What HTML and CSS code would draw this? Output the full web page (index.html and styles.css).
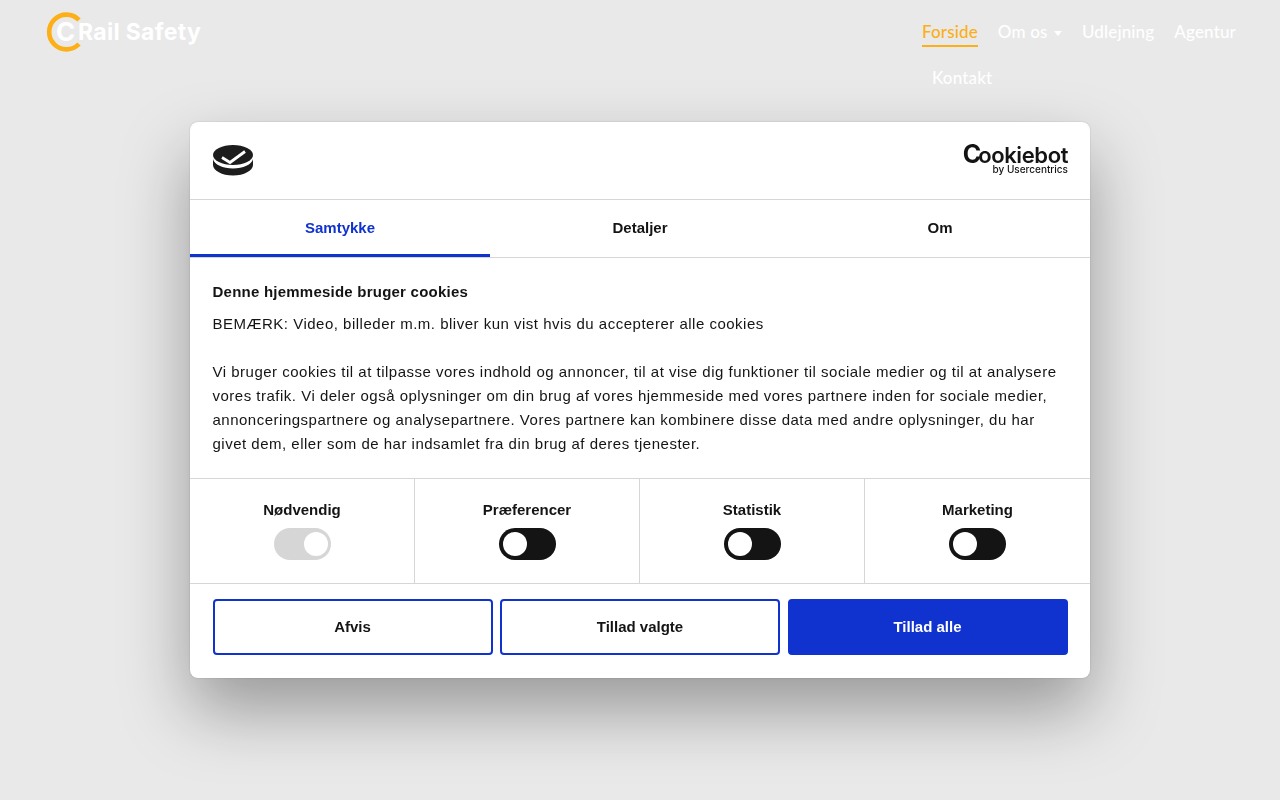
FILE: index.html
```html
<!DOCTYPE html>
<html lang="da">
<head>
<meta charset="utf-8">
<title>Rail Safety</title>
<link rel="stylesheet" href="styles.css">
</head>
<body>
<header class="site-header">
  <a class="logo">
    <svg class="logo-ring" width="40" height="42" viewBox="0 0 40 42"><path d="M33 9A17.330 17.330 0 1 0 33 33" fill="none" stroke="#fcaf17" stroke-width="4.600"/></svg>
    <span class="logo-c">C</span>
    <span class="logo-text">Rail Safety</span>
  </a>
  <nav class="nav">
    <a class="nav-item active">Forside</a>
    <a class="nav-item">Om os <span class="caret"></span></a>
    <a class="nav-item">Udlejning</a>
    <a class="nav-item">Agentur</a>
    <a class="nav-item wrapped">Kontakt</a>
  </nav>
</header>
<div class="overlay">
  <div class="dialog">
    <div class="dialog-head">
      <svg class="cookie" width="42" height="32" viewBox="0 0 42 32">
        <path d="M1 14v6c0 5.500 9 10.500 20 10.500s20-5 20-10.500v-6c-1 5.500-10 9.500-20 9.500s-19-4-20-9.500z" fill="#1d1d1d"/>
        <ellipse cx="21" cy="10" rx="20" ry="10" fill="#1d1d1d"/>
        <path d="M10 12.500l8 5 15-11" fill="none" stroke="#fff" stroke-width="2.800"/>
      </svg>
      <div class="cb-logo">
        <div class="cb-name"><span class="cb-c">C</span>ookiebot</div>
        <div class="cb-by">by Usercentrics</div>
      </div>
    </div>
    <div class="tabs">
      <div class="tab selected">Samtykke</div>
      <div class="tab">Detaljer</div>
      <div class="tab">Om</div>
    </div>
    <div class="content">
      <h2 class="title">Denne hjemmeside bruger cookies</h2>
      <p class="copy">BEMÆRK: Video, billeder m.m. bliver kun vist hvis du accepterer alle cookies<br><br>Vi bruger cookies til at tilpasse vores indhold og annoncer, til at vise dig funktioner til sociale medier og til at analysere vores trafik. Vi deler også oplysninger om din brug af vores hjemmeside med vores partnere inden for sociale medier, annonceringspartnere og analysepartnere. Vores partnere kan kombinere disse data med andre oplysninger, du har givet dem, eller som de har indsamlet fra din brug af deres tjenester.</p>
    </div>
    <div class="toggles">
      <div class="toggle-cell"><strong>Nødvendig</strong><span class="switch on"></span></div>
      <div class="toggle-cell"><strong>Præferencer</strong><span class="switch"></span></div>
      <div class="toggle-cell"><strong>Statistik</strong><span class="switch"></span></div>
      <div class="toggle-cell"><strong>Marketing</strong><span class="switch"></span></div>
    </div>
    <div class="actions">
      <button class="btn">Afvis</button>
      <button class="btn">Tillad valgte</button>
      <button class="btn primary">Tillad alle</button>
    </div>
  </div>
</div>
</body>
</html>
```
FILE: styles.css
```css
* { box-sizing: border-box; }
html, body { height: 100%; }
body {
  margin: 0;
  background: #e9e9e9;
  font-family: "Liberation Sans", Arial, sans-serif;
  overflow: hidden;
}
.site-header {
  display: flex;
  justify-content: space-between;
  align-items: flex-start;
  padding: 0 28px 0 46px;
}
.logo {
  display: flex;
  align-items: center;
  height: 63px;
  position: relative;
  color: #fff;
  font-family: "Inter", sans-serif;
  font-weight: 700;
}
.logo-ring { display: block; flex: none; }
.logo-c {
  position: absolute;
  left: 10px;
  top: 15px;
  font-size: 26px;
  line-height: 34px;
  font-weight: 700;
}
.logo-text {
  font-size: 23px;
  letter-spacing: .3px;
  margin-left: -8px;
  margin-top: 1px;
  white-space: nowrap;
}
.nav {
  display: flex;
  flex-wrap: wrap;
  width: 340px;
  padding-top: 9px;
  font-family: "Lato", sans-serif;
  font-size: 17px;
  font-weight: 500;
  letter-spacing: .15px;
  color: #fff;
}
.nav-item {
  margin: 0 10px;
  height: 46px;
  line-height: 46px;
  white-space: nowrap;
  position: relative;
}
.nav-item.active { color: #fcaf17; }
.nav-item.active::after {
  content: "";
  position: absolute;
  left: 0;
  right: 0;
  top: 36px;
  height: 2px;
  background: #fcaf17;
}
.nav-item.wrapped { margin-left: 20px; }
.caret {
  display: inline-block;
  width: 0;
  height: 0;
  margin-left: 2px;
  vertical-align: 2px;
  border-left: 4.500px solid transparent;
  border-right: 4.500px solid transparent;
  border-top: 5px solid #fff;
}
.overlay {
  position: fixed;
  inset: 0;
  display: flex;
  align-items: center;
  justify-content: center;
}
.dialog {
  width: 900px;
  height: 556px;
  background: #fff;
  border-radius: 8px;
  box-shadow: 0 32px 68px rgba(0,0,0,.35), 0 0 2px rgba(0,0,0,.2);
  color: #141414;
  display: flex;
  flex-direction: column;
  overflow: hidden;
}
.dialog-head {
  height: 78px;
  flex: none;
  display: flex;
  align-items: center;
  justify-content: space-between;
  padding: 0 22px;
  border-bottom: 1px solid #d6d6d6;
}
.cookie { display: block; }
.cb-logo {
  font-family: "Inter", sans-serif;
  text-align: right;
  color: #141414;
  padding-bottom: 3px;
}
.cb-name {
  font-size: 22px;
  font-weight: 600;
  line-height: 20px;
  letter-spacing: -.4px;
  white-space: nowrap;
}
.cb-c { font-size: 25px; font-weight: 700; letter-spacing: -3px; }
.cb-by {
  font-size: 10px;
  font-weight: 500;
  line-height: 12px;
  margin-top: -2px;
}
.tabs {
  display: flex;
  height: 58px;
  flex: none;
  border-bottom: 1px solid #d6d6d6;
}
.tab {
  flex: 1;
  display: flex;
  align-items: center;
  justify-content: center;
  padding-bottom: 2px;
  font-size: 15px;
  font-weight: 700;
}
.tab.selected {
  color: #1032cf;
  border-bottom: 3px solid #1032cf;
  padding-bottom: 0;
}
.content {
  flex: none;
  height: 221px;
  padding: 22px 22.500px 0;
  letter-spacing: .5px;
  border-bottom: 1px solid #d6d6d6;
}
.title {
  margin: 0 0 8px;
  font-size: 15px;
  line-height: 24px;
  font-weight: 700;
  letter-spacing: .23px;
}
.copy {
  margin: 0;
  font-size: 15px;
  line-height: 24px;
}
.toggles {
  display: flex;
  height: 105px;
  flex: none;
  border-bottom: 1px solid #d6d6d6;
}
.toggle-cell {
  flex: 0 0 225px;
  display: flex;
  flex-direction: column;
  align-items: center;
  padding-top: 21px;
  border-right: 1px solid #d6d6d6;
  font-size: 15px;
  line-height: 20px;
}
.toggle-cell:last-child { border-right: 0; }
.toggle-cell strong { font-weight: 700; }
.switch {
  display: block;
  width: 57px;
  height: 32px;
  margin-top: 8px;
  border-radius: 16px;
  background: #141414;
  padding: 4px;
}
.switch::before {
  content: "";
  display: block;
  width: 24px;
  height: 24px;
  border-radius: 50%;
  background: #fff;
}
.switch.on { background: #d6d6d6; padding-left: 30px; }
.actions {
  display: flex;
  gap: 7.500px;
  padding: 15px 22.500px 0;
}
.btn {
  flex: 1;
  height: 56px;
  border: 2px solid #1032cf;
  border-radius: 4px;
  padding-bottom: 2px;
  background: #fff;
  color: #141414;
  font: 700 15px "Liberation Sans", Arial, sans-serif;
}
.btn.primary { background: #1032cf; color: #fff; }
```
